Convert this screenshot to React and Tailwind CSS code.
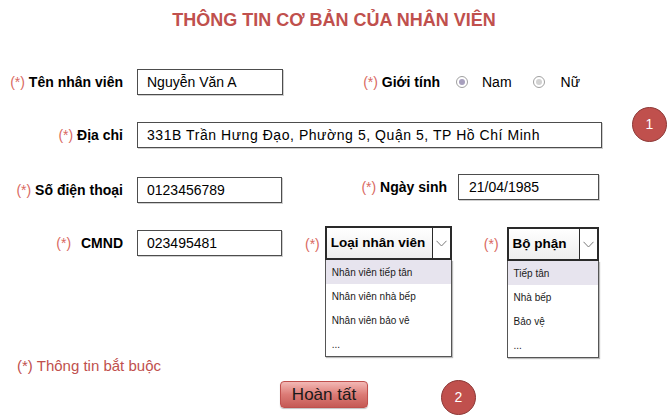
import React from "react";

const F = { fontFamily: '"Liberation Sans", Arial, sans-serif' };

function Req({ className = "" }) {
  return <span className={"text-[#d9695f] font-normal " + className}>(*)</span>;
}

function Input({ value, className = "" }) {
  return (
    <div
      className={
        "h-[26px] border border-[#4d4d4d] bg-white flex items-center pl-[9px] text-[14px] text-black shadow-[1px_1px_0_#cfcfcf] whitespace-nowrap " +
        className
      }
    >
      {value}
    </div>
  );
}

function Chevron() {
  return (
    <svg width="11" height="7" viewBox="0 0 11 7">
      <polyline points="0.5,0.8 5.5,6 10.5,0.8" fill="none" stroke="#7a7a7a" strokeWidth="1" />
    </svg>
  );
}

function Dropdown({ title, items, width, arrowW = 18 }) {
  return (
    <div className="flex flex-col" style={{ width }}>
      <div className="h-[34px] flex border-2 border-[#2a2a2a] bg-gradient-to-b from-[#ffffff] to-[#eeeeee]">
        <div className="flex-1 flex items-center pl-[4px] text-[13.5px] font-bold text-black">{title}</div>
        <div className="flex items-center justify-center border-l border-[#2a2a2a] bg-white" style={{ width: arrowW }}>
          <Chevron />
        </div>
      </div>
      <div className="border border-t-0 border-[#555] bg-white shadow-[1px_1px_1px_#bbb]">
        {items.map((it, i) => (
          <div
            key={i}
            className={
              "h-[24px] flex items-center pl-[6px] text-[10px] text-[#1a1a1a] " + (i === 0 ? "bg-[#e7e4ee]" : "")
            }
          >
            {it}
          </div>
        ))}
      </div>
    </div>
  );
}

function Radio({ dark }) {
  return (
    <div className="w-[12px] h-[12px] rounded-full border border-[#a0a0a0] bg-white flex items-center justify-center">
      <div className={"w-[6px] h-[6px] rounded-full " + (dark ? "bg-[#a79fbd]" : "bg-[#d2d2d2]")} />
    </div>
  );
}

export default function App() {
  return (
    <div className="w-[668px] h-[416px] bg-white relative overflow-hidden text-black" style={F}>
      <div className="pt-[8px] h-[32px] text-center text-[18px] leading-[24px] font-bold text-[#c0504d]">
        THÔNG TIN CƠ BẢN CỦA NHÂN VIÊN
      </div>

      {/* Row 1 */}
      <div className="mt-[37px] flex items-center h-[26px]">
        <div className="w-[123px] text-right text-[14px] font-bold whitespace-nowrap">
          <Req /> Tên nhân viên
        </div>
        <Input value="Nguyễn Văn A" className="ml-[14px] w-[146px]" />
        <div className="ml-[17px] w-[140px] text-right text-[14px] font-bold whitespace-nowrap">
          <Req /> Giới tính
        </div>
        <div className="ml-[16px] flex items-center text-[14px]">
          <Radio dark />
          <span className="ml-[14px]">Nam</span>
          <div className="ml-[21px]">
            <Radio />
          </div>
          <span className="ml-[16px]">Nữ</span>
        </div>
      </div>

      {/* Row 2 */}
      <div className="mt-[27px] flex items-center h-[26px]">
        <div className="w-[123px] text-right text-[14px] font-bold whitespace-nowrap">
          <Req /> Địa chỉ
        </div>
        <Input
          value="331B Trần Hưng Đạo, Phường 5, Quận 5, TP Hồ Chí Minh"
          className="ml-[14px] w-[465px] tracking-[0.55px]"
        />
      </div>

      {/* Row 3 */}
      <div className="mt-[26px] flex items-start">
        <div className="mt-[3px] flex items-center">
          <div className="w-[123px] text-right text-[14px] font-bold whitespace-nowrap">
            <Req /> Số điện thoại
          </div>
          <Input value="0123456789" className="ml-[14px] w-[145px]" />
        </div>
        <div className="flex items-center">
          <div className="ml-[18px] w-[147px] text-right text-[14px] font-bold whitespace-nowrap">
            <Req /> Ngày sinh
          </div>
          <Input value="21/04/1985" className="ml-[11px] w-[141px] pl-[10px]" />
        </div>
      </div>

      {/* Row 4 */}
      <div className="mt-[23px] flex items-start">
        <div className="mt-[4px] flex items-center">
          <div className="w-[123px] text-right text-[14px] font-bold whitespace-nowrap">
            <Req /> <span className="ml-[6px]">CMND</span>
          </div>
          <Input value="023495481" className="ml-[14px] w-[145px]" />
        </div>
        <div className="ml-[23px] h-[36px] flex items-center text-[14px]">
          <Req />
        </div>
        <div className="ml-[5px]">
          <Dropdown
            title="Loại nhân viên"
            width={127}
            items={["Nhân viên tiếp tân", "Nhân viên nhà bếp", "Nhân viên bảo vê", "..."]}
          />
        </div>
        <div className="ml-[32px] h-[36px] flex items-center text-[14px]">
          <Req />
        </div>
        <div className="ml-[8px] mt-[1px]">
          <Dropdown title="Bộ phận" width={92} items={["Tiếp tân", "Nhà bếp", "Bảo vệ", "..."]} />
        </div>
      </div>

      <div className="ml-[17px] h-[16px] leading-[16px] text-[15px] text-[#c0504d]">(*) Thông tin bắt buộc</div>

      <div className="mt-[7px] ml-[280px] w-[88px] h-[27px] rounded-[4px] border border-[#c0504d] bg-gradient-to-b from-[#f2b8b5] via-[#dc7b76] to-[#c55a55] flex items-center justify-center text-[17px] text-[#1a1a1a] shadow-[0_1px_1px_rgba(0,0,0,0.25)]">
        Hoàn tất
      </div>

      {/* annotation badges */}
      <div className="absolute left-[632px] top-[107px] w-[35px] h-[35px] rounded-full bg-[#c0504d] border border-[#8c3836] flex items-center justify-center text-white text-[14px]">
        1
      </div>
      <div className="absolute left-[441px] top-[380px] w-[35px] h-[35px] rounded-full bg-[#c0504d] border border-[#8c3836] flex items-center justify-center text-white text-[14px]">
        2
      </div>
    </div>
  );
}
